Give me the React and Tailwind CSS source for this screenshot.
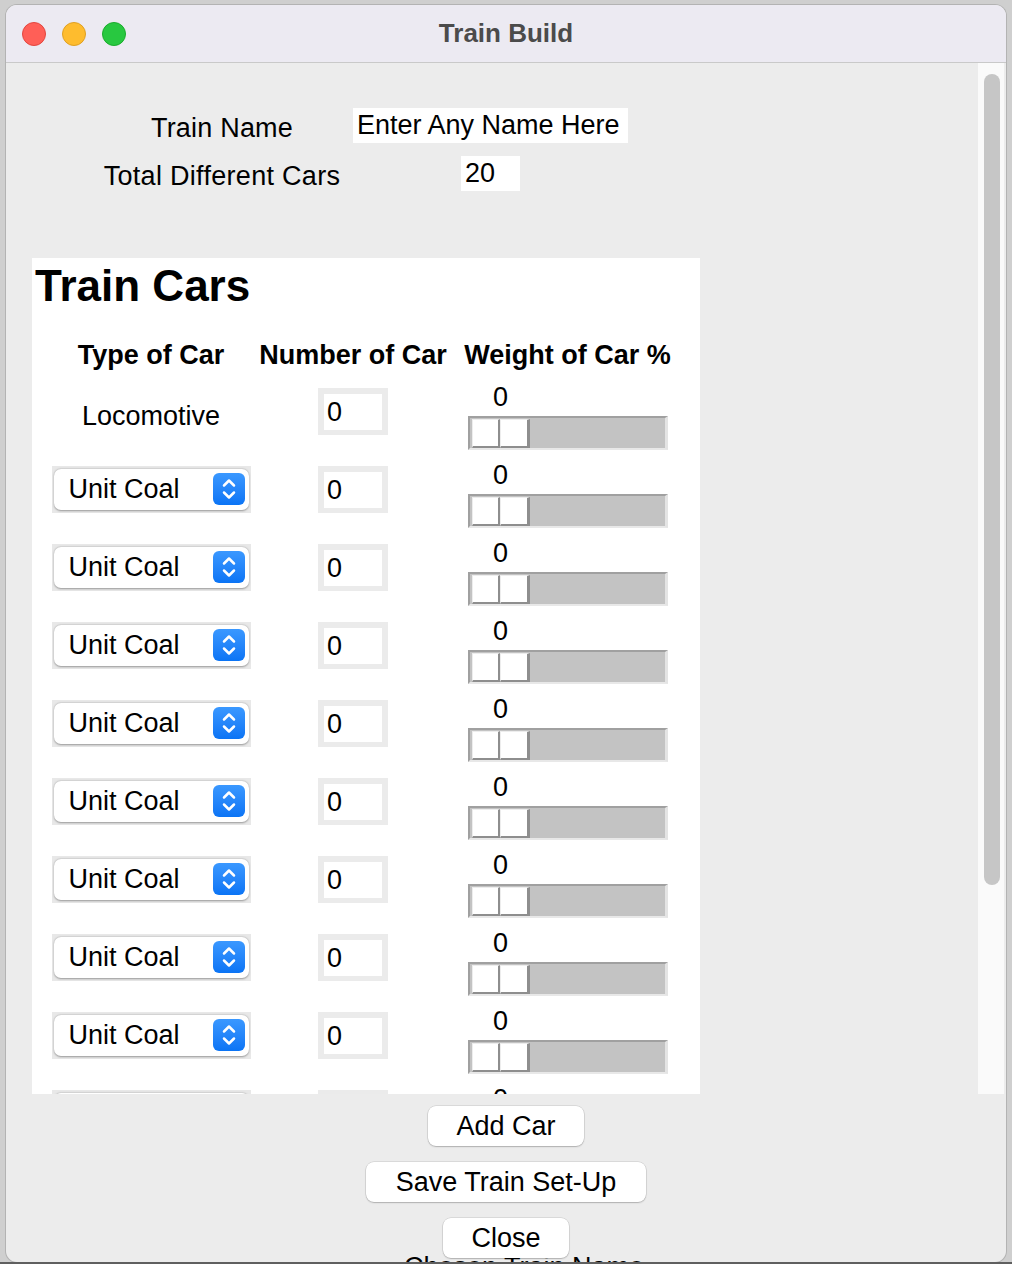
import React from "react";

// Tk-style "Train Build" window, drawn like a macOS dialog
const rows = Array.from({ length: 19 }, (_, i) => i);

function Stepper() {
  return (
    <div className="flex h-[32px] w-[32px] items-center justify-center rounded-[6px] bg-gradient-to-b from-[#3a98ff] to-[#0a74f5]">
      <svg width="32" height="32" viewBox="0 0 32 32" fill="none">
        <path d="M11 12.5 L16 7.5 L21 12.5" stroke="white" strokeWidth="2.5" strokeLinecap="round" strokeLinejoin="round" />
        <path d="M11 19.5 L16 24.5 L21 19.5" stroke="white" strokeWidth="2.5" strokeLinecap="round" strokeLinejoin="round" />
      </svg>
    </div>
  );
}

function Combo() {
  return (
    <div className="mt-[5px] h-[47px] w-[199px] bg-[#e8e8e8] px-[2px] pt-[3px] pb-[3.5px]">
      <div className="flex h-full items-center justify-between rounded-[7px] bg-white pl-[15px] pr-[3.5px] shadow-[0_0.5px_2px_rgba(0,0,0,0.35)]">
        <span className="leading-[30px]">Unit Coal</span>
        <Stepper />
      </div>
    </div>
  );
}

function NumberBox() {
  return (
    <div className="mt-[5px] h-[47px] w-[70px] bg-[#ebebeb] px-[6px] pt-[6px] pb-[5px]">
      <div className="h-full bg-white pl-[3px] leading-[36px]">0</div>
    </div>
  );
}

function Slider() {
  return (
    <div className="w-[200px]">
      <div className="ml-[4px] w-[58px] text-center leading-[28px]">0</div>
      <div className="mt-[5px] flex h-[34px] border-t-2 border-l-2 border-b-2 border-r-[3px] border-t-[#a0a0a0] border-l-[#a0a0a0] border-b-[#e8e8e8] border-r-[#e4e4e4] bg-[#c3c3c3] pt-px pl-[2px]">
        <div className="flex h-[29px]">
          <div className="w-[28px] border-t border-l border-r-2 border-b-2 border-t-[#ededed] border-l-[#ededed] border-r-[#8e8e8e] border-b-[#8e8e8e] bg-white" />
          <div className="w-[30px] border-t border-l border-r-[3px] border-b-2 border-t-[#ededed] border-l-[#ededed] border-r-[#8e8e8e] border-b-[#8e8e8e] bg-white" />
        </div>
      </div>
    </div>
  );
}

function CarRow({ first }) {
  return (
    <div className="flex h-[78px]">
      <div className="flex w-[214px] justify-center">
        {first ? <div className="mt-[19px] leading-[28px]">Locomotive</div> : <Combo />}
      </div>
      <div className="flex w-[190px] justify-center">
        <NumberBox />
      </div>
      <div className="flex w-[239px] justify-center">
        <Slider />
      </div>
    </div>
  );
}

export default function App() {
  return (
    <div className="flex h-[1264px] w-[1012px] flex-col overflow-hidden bg-[#cfcfcf] font-['Liberation_Sans',Arial,sans-serif] text-[27px] text-black">
      <div className="px-[6px] pt-[5px]">
        <div className="flex h-[1257px] w-[1000px] flex-col overflow-hidden rounded-[11px] bg-[#ececec] shadow-[0_0_0_1px_#b3b3b3]">
          {/* title bar */}
          <div className="grid h-[58px] shrink-0 grid-cols-[1fr_auto_1fr] items-center border-b border-[#c9c9c9] bg-[#eceaf2]">
            <div className="flex gap-[16px] pl-[16px]">
              <div className="h-[24px] w-[24px] rounded-full border border-[#e2463f] bg-[#ff5f57]" />
              <div className="h-[24px] w-[24px] rounded-full border border-[#dfa023] bg-[#febc2e]" />
              <div className="h-[24px] w-[24px] rounded-full border border-[#1aac2c] bg-[#28c840]" />
            </div>
            <div className="text-[26px] font-bold text-[#4b4b4b]">Train Build</div>
            <div />
          </div>

          {/* scroll area */}
          <div className="flex h-[1031px] shrink-0">
            <div className="w-[972px] overflow-hidden">
              <div className="ml-[91px] grid grid-cols-[250px_287px] gap-y-[13px] pt-[45px]">
                <div className="h-[35px] pt-[5px] text-center leading-[30px] tracking-[0.2px]">Train Name</div>
                <div className="h-[35px] w-[275px] justify-self-center bg-white pl-[4px] leading-[35px]">Enter Any Name Here</div>
                <div className="h-[35px] pt-[5px] text-center leading-[30px] tracking-[0.3px]">Total Different Cars</div>
                <div className="h-[35px] w-[59px] justify-self-center bg-white pl-[4px] leading-[35px]">20</div>
              </div>

              <div className="ml-[26px] mt-[67px] w-[668px] bg-white pt-[6px]">
                <h2 className="pl-[3px] text-[44px] font-bold leading-[44px]">Train Cars</h2>
                <div className="mt-[34px] flex pl-[12px] text-[27px] font-bold leading-[27px] whitespace-nowrap">
                  <div className="w-[214px] text-center">Type of Car</div>
                  <div className="w-[190px] text-center">Number of Car</div>
                  <div className="w-[239px] text-center">Weight of Car %</div>
                </div>
                <div className="mt-[14px] pl-[12px]">
                  <CarRow first />
                  {rows.map((r) => (
                    <CarRow key={r} />
                  ))}
                </div>
              </div>
            </div>
            <div className="w-[26px] bg-[#fafafa] px-[6px] pt-[11px]">
              <div className="h-[811px] w-[16px] rounded-full bg-[#c6c6c6]" />
            </div>
          </div>

          {/* buttons */}
          <div className="mt-[12px] flex flex-col items-center gap-[16px]">
            <button className="h-[40px] w-[156px] rounded-[8px] bg-white leading-[40px] shadow-[0_0_0_0.5px_rgba(0,0,0,0.15),0_1px_1.5px_rgba(0,0,0,0.2)]">
              Add Car
            </button>
            <button className="h-[40px] w-[280px] rounded-[8px] bg-white leading-[40px] shadow-[0_0_0_0.5px_rgba(0,0,0,0.15),0_1px_1.5px_rgba(0,0,0,0.2)]">
              Save Train Set-Up
            </button>
            <button className="relative z-10 h-[40px] w-[126px] rounded-[8px] bg-white leading-[40px] shadow-[0_0_0_0.5px_rgba(0,0,0,0.15),0_1px_1.5px_rgba(0,0,0,0.2)]">
              Close
            </button>
          </div>
          <div className="-mt-[6px] pl-[36px] text-center leading-[30px]">Chosen Train Name</div>
        </div>
      </div>
      <div className="h-[2px] bg-[#5f5f5f]" />
    </div>
  );
}
